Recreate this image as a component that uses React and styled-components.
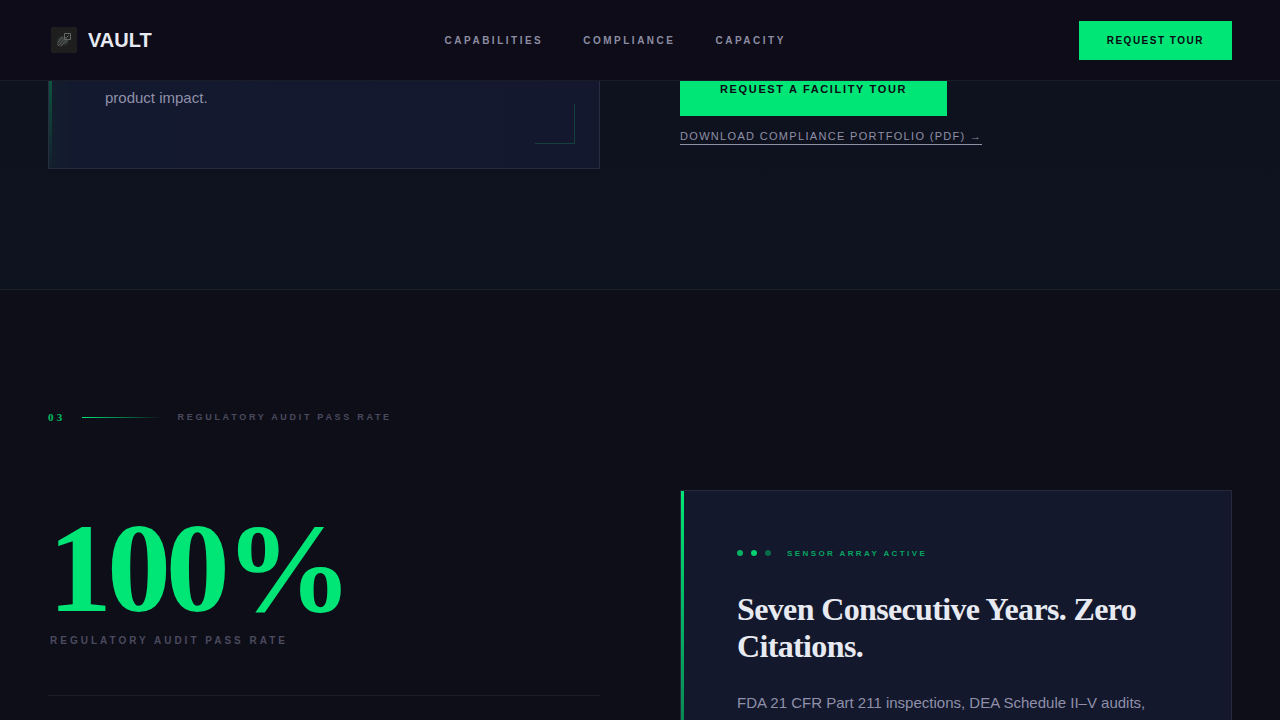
import React from 'react';
import styled, { createGlobalStyle } from 'styled-components';

const sans = '"Liberation Sans", Arial, sans-serif';
const serif = '"Liberation Serif", "Times New Roman", serif';
const green = '#00e676';

const GlobalStyle = createGlobalStyle`
  *, *::before, *::after { box-sizing: border-box; }
  body { margin: 0; background: #0e0e19; font-family: ${sans}; }
`;

const Page = styled.div`
  height: 100vh;
  overflow: hidden;
`;

const Header = styled.header`
  position: fixed;
  inset: 0 0 auto;
  z-index: 10;
  display: flex;
  align-items: center;
  justify-content: space-between;
  height: 81px;
  padding: 0 48px;
  background: #0d0c18;
  border-bottom: 1px solid #1a1c28;
`;

const Brand = styled.a`
  display: flex;
  align-items: center;
  gap: 8px;
  color: #e8eaf2;
  font-size: 20px;
  font-weight: 700;
  text-decoration: none;
`;

const Logo = styled.svg`
  width: 32px;
  height: 32px;
`;

const Nav = styled.nav`
  display: flex;
  gap: 40px;
`;

const NavLink = styled.a`
  color: #8c8ca2;
  font-size: 10px;
  font-weight: 700;
  letter-spacing: 0.25em;
  text-decoration: none;
`;

const Button = styled.button`
  align-self: ${(p) => (p.$large ? 'flex-start' : 'center')};
  padding: ${(p) => (p.$large ? '21px 40px' : '14px 28px')};
  border: 0;
  background: ${green};
  color: #0a0a14;
  font-family: inherit;
  font-size: ${(p) => (p.$large ? '11px' : '10px')};
  font-weight: 700;
  line-height: ${(p) => (p.$large ? '12px' : '11px')};
  letter-spacing: 0.15em;
`;

const Columns = styled.div`
  display: grid;
  grid-template-columns: 1fr 1fr;
  gap: 80px;
`;

const Facility = styled.section`
  padding: 0 48px 120px;
  background: linear-gradient(#0e111e, #0e1320);
`;

const ImpactCard = styled.article`
  position: relative;
  padding: 83px 56px 57px;
  border: 1px solid #252d3f;
  background: linear-gradient(90deg, #13202d, #13192e 4%, #13182e);

  &::before {
    content: '';
    position: absolute;
    inset: 0 auto 0 0;
    width: 3px;
    background: linear-gradient(#00e67666, #00e67640 50%, transparent);
  }

  &::after {
    content: '';
    position: absolute;
    right: 24px;
    bottom: 24px;
    width: 40px;
    height: 40px;
    border: solid #14403f;
    border-width: 0 1px 1px 0;
  }
`;

const Body = styled.p`
  margin: 0;
  color: #9090aa;
  font-size: 15px;
  line-height: 27px;
`;

const Actions = styled.div`
  display: flex;
  flex-direction: column;
  align-items: flex-start;
  gap: 13px;
  padding-top: 62px;
`;

const Download = styled.a`
  padding-bottom: 1px;
  border-bottom: 1px solid #9090a6;
  color: #9090a6;
  font-size: 11px;
  line-height: 14px;
  letter-spacing: 0.12em;
  text-decoration: none;
`;

const Audit = styled.section`
  padding: 120px 48px;
  border-top: 1px solid #1e1e29;
  background: #0e0e19;
`;

const Eyebrow = styled.div`
  display: flex;
  align-items: center;
  gap: 16px;
  height: 14px;
  margin-bottom: 66px;
`;

const Index = styled.span`
  color: ${green};
  font-family: ${serif};
  font-size: 11px;
  font-weight: 700;
  letter-spacing: 0.3em;
  opacity: 0.8;
`;

const Rule = styled.span`
  width: 80px;
  height: 1px;
  background: linear-gradient(90deg, ${green}, #00e67600);
`;

const Label = styled.span`
  color: #4a4a5e;
  font-size: ${(p) => p.$size || 9}px;
  font-weight: 700;
  letter-spacing: 0.3em;
`;

const Stat = styled.div`
  display: flex;
  flex-direction: column;
  padding-top: 22px;
`;

const Figure = styled.strong`
  color: ${green};
  font-family: ${serif};
  font-size: 128px;
  line-height: 112px;
  letter-spacing: -0.04em;
`;

const Caption = styled.div`
  padding: 6px 2px 47px;
  border-bottom: 1px solid #1b1b27;
`;

const AuditCard = styled.article`
  position: relative;
  min-height: 440px;
  padding: 56px;
  border: 1px solid #25293a;
  background: #13182c;

  &::before {
    content: '';
    position: absolute;
    inset: 0 auto 0 0;
    width: 3px;
    background: linear-gradient(${green}, #00e67626);
  }
`;

const Sensor = styled.div`
  display: flex;
  align-items: center;
  gap: 16px;
  height: 12px;
  margin-bottom: 32px;
  color: #06a562;
  font-size: 8px;
  font-weight: 700;
  letter-spacing: 0.3em;
`;

const Dots = styled.span`
  display: flex;
  gap: 8px;
`;

const Dot = styled.i`
  width: 6px;
  height: 6px;
  border-radius: 50%;
  background: ${green};
  opacity: ${(p) => p.$level};
`;

const Title = styled.h2`
  margin: 0 0 24px;
  color: #e8eaf2;
  font-family: ${serif};
  font-size: 32px;
  font-weight: 700;
  line-height: 37px;
  letter-spacing: -0.02em;
`;

export default function App() {
  return (
    <Page>
      <GlobalStyle />
      <Header>
        <Brand href="#top">
          <Logo viewBox="0 0 32 32" fill="none" aria-hidden="true">
            <rect x="3" y="3" width="26" height="26" rx="2" fill="#1e1e1e" />
            <path d="M9 17q1-4 6-5l2 2-8 8 0-3 3-4zM11 22l7-9 3 4q-1 3-5 5l1-3-4 3z" fill="#353a39" />
            <path d="M9.500 18.500l5-5.500M10 22l8-9M13 22.500l6-7" stroke="#5a605f" />
            <path d="M16.500 9.500h6v6h-6z" stroke="#626866" />
            <path d="M18.500 13.500l2-2" stroke="#747977" />
          </Logo>
          VAULT
        </Brand>
        <Nav>
          <NavLink href="#capabilities">CAPABILITIES</NavLink>
          <NavLink href="#compliance">COMPLIANCE</NavLink>
          <NavLink href="#capacity">CAPACITY</NavLink>
        </Nav>
        <Button type="button">REQUEST TOUR</Button>
      </Header>
      <main>
        <Facility>
          <Columns>
            <ImpactCard>
              <Body>product impact.</Body>
            </ImpactCard>
            <Actions>
              <Button type="button" $large>REQUEST A FACILITY TOUR</Button>
              <Download href="#portfolio">DOWNLOAD COMPLIANCE PORTFOLIO (PDF) →</Download>
            </Actions>
          </Columns>
        </Facility>
        <Audit id="compliance">
          <Eyebrow>
            <Index>03</Index>
            <Rule />
            <Label>REGULATORY AUDIT PASS RATE</Label>
          </Eyebrow>
          <Columns>
            <Stat>
              <Figure>100%</Figure>
              <Caption>
                <Label $size={10}>REGULATORY AUDIT PASS RATE</Label>
              </Caption>
            </Stat>
            <AuditCard>
              <Sensor>
                <Dots>
                  <Dot $level={0.75} />
                  <Dot $level={0.9} />
                  <Dot $level={0.4} />
                </Dots>
                SENSOR ARRAY ACTIVE
              </Sensor>
              <Title>Seven Consecutive Years. Zero Citations.</Title>
              <Body>FDA 21 CFR Part 211 inspections, DEA Schedule II–V audits,</Body>
            </AuditCard>
          </Columns>
        </Audit>
      </main>
    </Page>
  );
}
